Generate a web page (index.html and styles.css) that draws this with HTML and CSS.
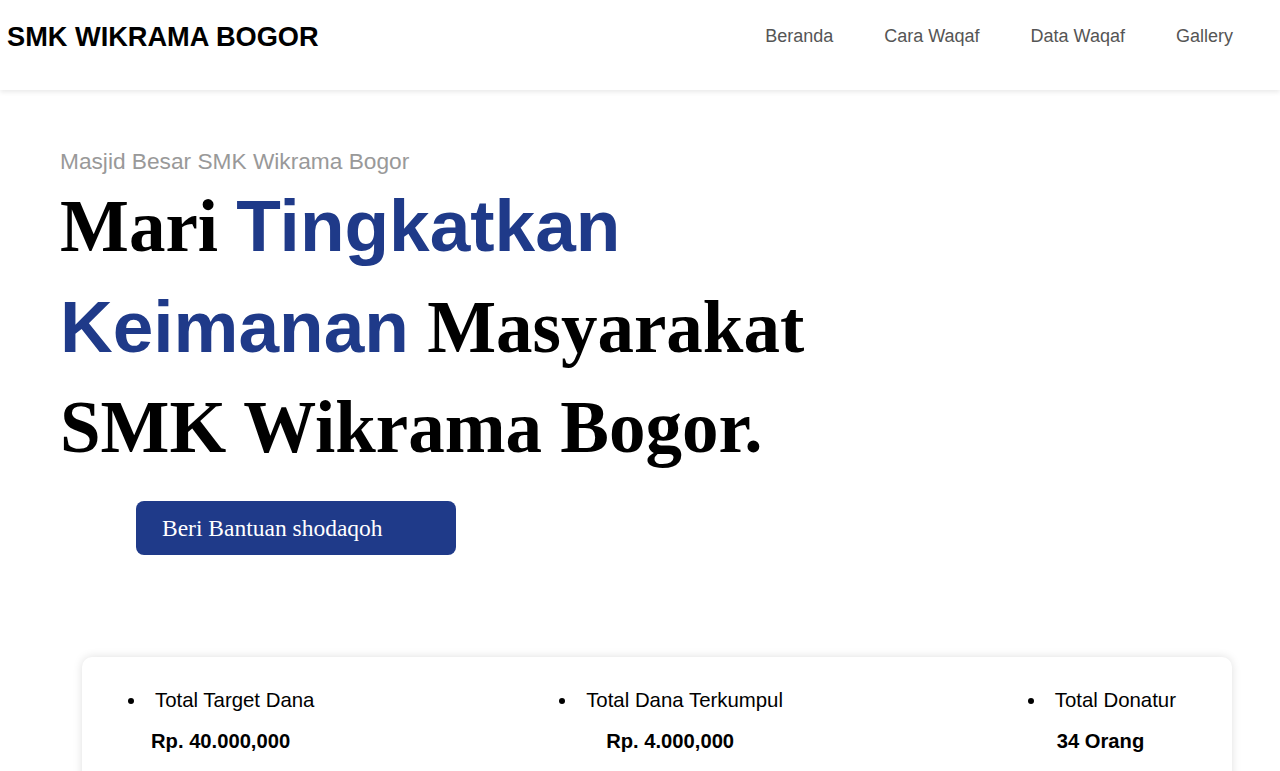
FILE: index.html
```html
<!DOCTYPE html>
<html lang="id">
<head>
<meta charset="utf-8">
<title>SMK Wikrama Bogor</title>
<link rel="stylesheet" href="styles.css">
</head>
<body>
<header class="topbar">
  <div class="brand">SMK WIKRAMA BOGOR</div>
  <nav class="menu">
    <a href="#">Beranda</a>
    <a href="#">Cara Waqaf</a>
    <a href="#">Data Waqaf</a>
    <a href="#">Gallery</a>
  </nav>
</header>
<main>
  <section class="hero">
    <p class="eyebrow">Masjid Besar SMK Wikrama Bogor</p>
    <h1 class="headline">Mari <span class="accent">Tingkatkan</span><br><span class="accent">Keimanan</span> Masyarakat<br>SMK Wikrama Bogor.</h1>
    <a class="cta" href="#">Beri Bantuan shodaqoh</a>
  </section>
  <section class="stats">
    <div class="stat">
      <ul><li>Total Target Dana</li></ul>
      <p class="value v1">Rp. 40.000,000</p>
    </div>
    <div class="stat">
      <ul><li>Total Dana Terkumpul</li></ul>
      <p class="value v2">Rp. 4.000,000</p>
    </div>
    <div class="stat">
      <ul><li>Total Donatur</li></ul>
      <p class="value v3">34 Orang</p>
    </div>
  </section>
</main>
</body>
</html>
```
FILE: styles.css
```css
* { box-sizing: border-box; }
html, body { margin: 0; padding: 0; background: #fff; }
body { font-family: "Liberation Sans", Arial, sans-serif; color: #000; }

.topbar {
  height: 90px;
  padding: 0 47px 17px 7px;
  display: flex;
  align-items: center;
  justify-content: space-between;
  background: #fff;
  box-shadow: 0 2px 5px rgba(0,0,0,0.09);
  position: relative;
}
.brand { font-size: 27.2px; font-weight: bold; }
.menu { display: flex; gap: 51px; }
.menu a { color: #555; text-decoration: none; font-size: 18px; }

.hero { padding: 0 0 0 60px; }
.eyebrow {
  margin: 0;
  padding-top: 58px;
  font-size: 22.7px;
  color: #999;
}
.headline {
  margin: 1px 0 0 0;
  font-family: "Liberation Serif", "Times New Roman", serif;
  font-size: 73px;
  font-weight: bold;
  line-height: 100px;
}
.accent { font-family: "Liberation Sans", Arial, sans-serif; color: #1f3a89; }
.cta {
  display: block;
  width: 320px;
  height: 54px;
  margin: 23px 0 0 76px;
  padding-left: 26px;
  border-radius: 8px;
  background: #1f3a89;
  color: #fff;
  text-decoration: none;
  font-family: "Liberation Serif", "Times New Roman", serif;
  font-size: 23.5px;
  line-height: 54px;
}

.stats {
  margin: 102px 48px 0 82px;
  padding: 32px 56px 40px 65px;
  display: flex;
  justify-content: space-between;
  background: #fff;
  border-radius: 10px;
  box-shadow: 0 0 10px rgba(0,0,0,0.13);
  min-height: 160px;
}
.stat ul { margin: 0; padding: 0; font-size: 20.4px; }
.stat li { list-style: disc outside; padding-left: 8px; }
.value { margin: 18px 0 0 0; font-size: 20.2px; font-weight: bold; }
.v1 { margin-left: 4px; }
.v2 { margin-left: 28px; }
.v3 { margin-left: 10px; }
```
